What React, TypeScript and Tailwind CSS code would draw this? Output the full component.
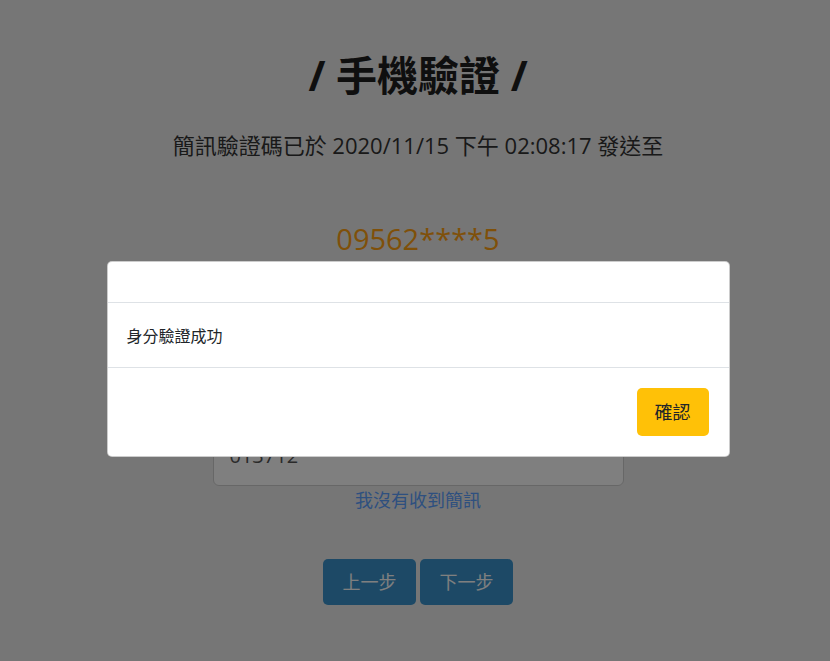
import React from "react";

const font = { fontFamily: '"Open Sans", "Noto Sans CJK TC", sans-serif' };

export default function App() {
  return (
    <div className="relative h-[661px] w-full overflow-hidden bg-[#ececec]" style={font}>
      <div className="flex flex-col items-center pl-[6px] pt-[50px]">
        <h1 className="h-[50px] text-[41px] font-bold leading-[50px] text-[#1e1e1e]">/ 手機驗證 /</h1>
        <p className="mt-[29px] text-[22px] leading-[33px] text-[#333]">簡訊驗證碼已於 2020/11/15 下午 02:08:17 發送至</p>
        <p className="mt-[57px] text-[29px] leading-[40px] text-[#ffa012]">09562****5</p>
        <div className="mt-[169px] h-[58px] w-[411px] rounded-[6px] border border-[#cfcfcf] bg-white px-[16px] pt-[12px] text-[20px] leading-[30px] text-[#555]">
          013712
        </div>
        <a className="mt-[1px] text-[18px] leading-[27px] text-[#5ca0ff]">我沒有收到簡訊</a>
        <div className="mt-[45px] flex gap-[4px]">
          <button className="h-[46px] w-[93px] rounded-[5px] bg-[#3a93cc] text-[18px] text-white">上一步</button>
          <button className="h-[46px] w-[93px] rounded-[5px] bg-[#3a93cc] text-[18px] text-white">下一步</button>
        </div>
      </div>

      <div className="absolute inset-0 bg-black/50" />

      <div className="absolute inset-0 flex justify-center pl-[6px] pt-[261px]">
        <div className="h-[196px] w-[623px] overflow-hidden rounded-[5px] border border-black/20 bg-white">
          <div className="h-[41px] border-b border-[#dee2e6]" />
          <div className="flex h-[65px] items-center border-b border-[#dee2e6] px-[19px] pt-[2px] text-[16px] text-[#212529]">
            身分驗證成功
          </div>
          <div className="flex justify-end px-[20px] pt-[20px]">
            <button className="h-[48px] w-[72px] rounded-[5px] bg-[#ffc107] text-[18px] text-[#212529]">確認</button>
          </div>
        </div>
      </div>
    </div>
  );
}
